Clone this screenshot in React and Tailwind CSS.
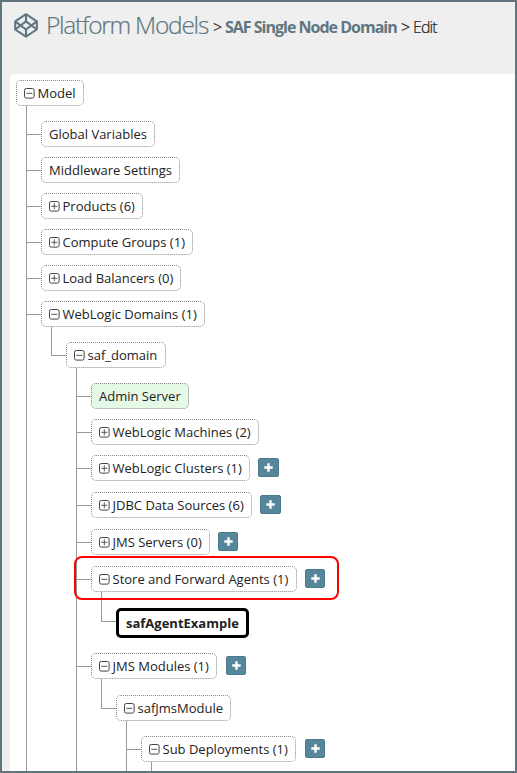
import React from "react";

const tree = {
  label: "Model",
  icon: "minus",
  width: 68,
  children: [
    { label: "Global Variables", width: 114, gap: 15 },
    { label: "Middleware Settings", width: 139, gap: 10 },
    { label: "Products (6)", icon: "plus", width: 102, gap: 10 },
    { label: "Compute Groups (1)", icon: "plus", width: 152, gap: 10 },
    { label: "Load Balancers (0)", icon: "plus", width: 140, gap: 10 },
    {
      label: "WebLogic Domains (1)",
      icon: "minus",
      width: 164,
      gap: 10,
      more: true,
      children: [
        {
          label: "saf_domain",
          icon: "minus",
          width: 100,
          gap: 15,
          children: [
            { label: "Admin Server", width: 98, gap: 15, tone: "green" },
            { label: "WebLogic Machines (2)", icon: "plus", width: 168, gap: 10 },
            { label: "WebLogic Clusters (1)", icon: "plus", width: 159, gap: 10, add: 8, addWidth: 21 },
            { label: "JDBC Data Sources (6)", icon: "plus", width: 161, gap: 11, add: 8, addWidth: 21 },
            { label: "JMS Servers (0)", icon: "plus", width: 119, gap: 11, add: 8 },
            {
              label: "Store and Forward Agents (1)",
              icon: "minus",
              width: 206,
              gap: 11,
              add: 8,
              highlight: true,
              children: [{ label: "safAgentExample", width: 133, gap: 16, tone: "selected" }],
            },
            {
              label: "JMS Modules (1)",
              icon: "minus",
              width: 126,
              gap: 15,
              add: 9,
              more: true,
              children: [
                {
                  label: "safJmsModule",
                  icon: "minus",
                  width: 115,
                  gap: 16,
                  children: [
                    {
                      label: "Sub Deployments (1)",
                      icon: "minus",
                      width: 155,
                      gap: 15,
                      add: 9,
                      more: true,
                      children: [{ label: "", width: 0, gap: 30 }],
                    },
                  ],
                },
              ],
            },
          ],
        },
      ],
    },
  ],
};

const tones = {
  normal: "h-[26px] px-[7px] rounded-[5px] border border-dotted border-[#888] bg-white",
  green: "h-[26px] px-[7px] rounded-[5px] border border-dotted border-[#888] bg-[#e6f9e6]",
  selected: "h-[30px] px-[7px] rounded-[5px] border-[3px] border-black bg-white font-bold",
};

function ToggleIcon({ kind }) {
  return (
    <svg className="mr-[2.5px] shrink-0" width="11" height="11" viewBox="0 0 11 11" fill="none" stroke="#444">
      <rect x="0.5" y="0.5" width="9.6" height="9.6" rx="1.8" />
      <path stroke="#555" d={kind === "plus" ? "M2.3 5.3h6M5.3 2.3v6" : "M2.3 5.3h6"} />
    </svg>
  );
}

function AddButton({ margin, width = 20 }) {
  return (
    <button
      className="-mt-px flex h-[19px] shrink-0 items-center justify-center rounded-[2px] border border-[#4a7a8d] bg-[#56869a]"
      style={{ marginLeft: margin, width }}
    >
      <svg className="-mt-px" width="9" height="9" viewBox="0 0 9 9" fill="#fff">
        <path d="M3.3 .3h2.4v3h3v2.4h-3v3H3.3v-3h-3V3.3h3z" />
      </svg>
    </button>
  );
}

function Node({ node }) {
  return (
    <>
      <div className="relative flex items-center">
        <div
          className={`flex shrink-0 items-center whitespace-nowrap ${tones[node.tone || "normal"]}`}
          style={{ width: node.width }}
        >
          {node.icon && <ToggleIcon kind={node.icon} />}
          <span>{node.label}</span>
        </div>
        {node.add && <AddButton margin={node.add} width={node.addWidth} />}
        {node.highlight && (
          <div className="absolute -left-[17px] -top-[10px] z-10 h-[44px] w-[265px] rounded-[8px] border-2 border-[#ff0000]" />
        )}
      </div>
      {node.children && <Branch nodes={node.children} />}
    </>
  );
}

function Branch({ nodes }) {
  return (
    <ul className="ml-[10px]">
      {nodes.map((node, i) => {
        const continues = i < nodes.length - 1 || node.more;
        return (
          <li key={i} className="flex">
            <div className="flex w-[15px] shrink-0 flex-col">
              <div className="shrink-0 border-b border-l border-[#999]" style={{ height: node.gap + 14 }} />
              {continues && <div className="flex-1 border-l border-[#999]" />}
            </div>
            <div style={{ paddingTop: node.gap }}>{node.label && <Node node={node} />}</div>
          </li>
        );
      })}
    </ul>
  );
}

export default function App() {
  return (
    <div className="flex h-[773px] w-[517px] flex-col overflow-hidden border-2 border-[#5f747c] bg-[#efefef] font-['Open_Sans','Noto_Sans',sans-serif] text-[#222]">
      <header className="flex h-[72px] shrink-0 items-start whitespace-nowrap pl-[12px] text-[16px] leading-[24px]">
        <svg className="mt-[11px] shrink-0" width="24" height="25" viewBox="0 0 24 25" fill="none" stroke="#5f7680" strokeWidth="2.1" strokeLinejoin="round">
          <path d="M12 1.2 22.8 8.3v8.2L12 23.7 1.2 16.5V8.3z" />
          <path d="M12 1.2v7.2M12 16.5v7.2M1.2 8.3 12 16.5l10.8-8.2M1.2 16.5 12 8.4l10.8 8.1" />
        </svg>
        <h1 className="ml-[8px] mt-[5px] w-[167px] text-[24.5px] font-light leading-[36px] tracking-[-1.25px] text-[#5f7680] [-webkit-text-stroke:0.2px_#5f7680]">
          Platform Models
        </h1>
        <span className="mt-[13px] w-[12px] font-light [-webkit-text-stroke:0.2px_#222]">&gt;</span>
        <strong className="mt-[13px] w-[176px] font-bold tracking-[-1px] text-[#5f7680]">SAF Single Node Domain</strong>
        <span className="mt-[13px] w-[12px] font-light [-webkit-text-stroke:0.2px_#222]">&gt;</span>
        <span className="mt-[13px] font-light tracking-[-0.9px] [-webkit-text-stroke:0.2px_#222]">Edit</span>
      </header>
      <main className="ml-[8px] min-h-0 flex-1 overflow-hidden rounded-tl-[4px] bg-white pl-[6px] pt-[6px] text-[13px] leading-[18px]">
        <div className="flex h-[691px] flex-col">
          <div className="shrink-0">
            <Node node={tree} />
          </div>
          <div className="ml-[10px] flex-1 border-l border-[#999]" />
        </div>
      </main>
    </div>
  );
}
